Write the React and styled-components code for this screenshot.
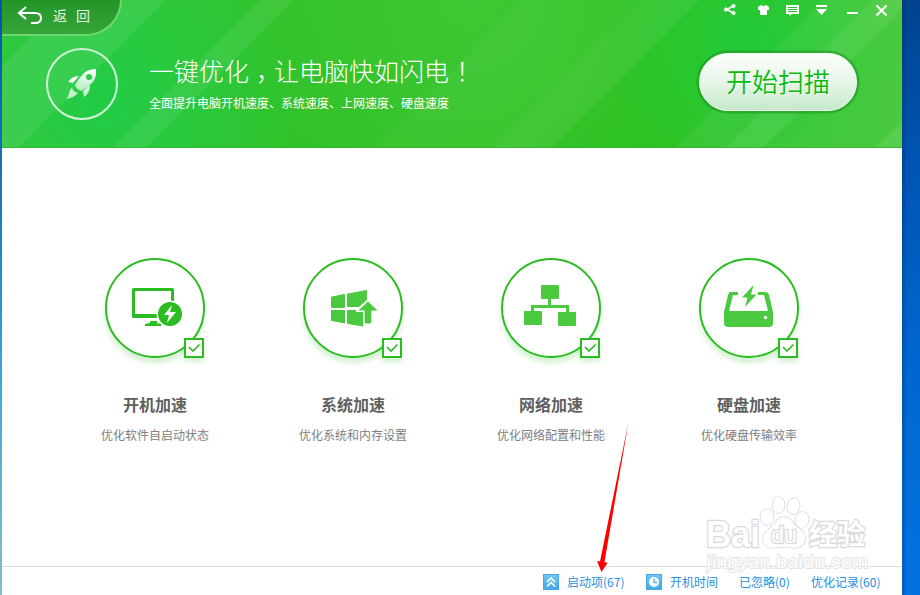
import styled, { createGlobalStyle } from "styled-components";

const GlobalStyle = createGlobalStyle`
  * {
    box-sizing: border-box;
  }

  body {
    margin: 0;
    overflow: hidden;
    font-family: "Noto Sans CJK SC", "Noto Sans", sans-serif;
    font-size: 12px;
  }

  svg {
    display: block;
    flex-shrink: 0;
  }
`;

const Desktop = styled.div`
  position: relative;
  display: grid;
  grid-template-columns: 2px 900px 18px;
  width: 920px;
  height: 595px;
`;

const LeftEdge = styled.div`
  background: linear-gradient(#0451a8, #1a7cc4 35%, #45add0 68%, #85bdc8);
`;

const RightEdge = styled.div`
  background:
    linear-gradient(90deg, rgba(0, 20, 60, 0.25), transparent 5px),
    linear-gradient(#01438f, #0053b0 25%, #0066cf 60%, #0272e0);
`;

const Window = styled.main`
  display: flex;
  flex-direction: column;
  background-color: #fff;
`;

const Header = styled.header`
  position: relative;
  height: 148px;
  border-bottom: 1px solid #35b933;
  background:
    radial-gradient(circle at 105px 100px, #22cc46 0, rgba(34, 204, 70, 0) 200px),
    radial-gradient(circle at 750px 45px, #22ca38 0, rgba(34, 202, 56, 0) 140px),
    radial-gradient(circle at 470px 0, #40c735 0, rgba(64, 199, 53, 0) 220px),
    linear-gradient(90deg, #38c63a, #32c22a 30%, #2dc222 72%, #40c835);
`;

const Rays = styled.svg`
  position: absolute;
  inset: 0;
`;

const TopBar = styled.div`
  position: relative;
  display: flex;
  justify-content: space-between;
  height: 36px;
`;

const BackTab = styled.div`
  display: flex;
  align-items: center;
  gap: 10px;
  width: 120px;
  height: 36px;
  padding: 0 0 4px 15px;
  border-right: 2px solid #6fd670;
  border-bottom: 2px solid #6fd670;
  border-bottom-right-radius: 36px;
  background: linear-gradient(#239426, #35a63a);
  color: #e2f6e2;
  font-size: 14px;
  letter-spacing: 9px;
  white-space: nowrap;
`;

const WindowTools = styled.div`
  display: grid;
  grid-template-columns: 34px 29px 29px 31px 29px 20px;
  padding-top: 3px;
  margin-right: 7px;
`;

const Hero = styled.div`
  position: relative;
  display: flex;
  padding: 12px 45px 0 44px;
`;

const RocketCircle = styled.div`
  display: flex;
  align-items: center;
  justify-content: center;
  width: 72px;
  height: 72px;
  border: 2px solid #d3f4d8;
  border-radius: 50%;
`;

const HeroText = styled.div`
  flex: 1;
  margin-left: 31px;
  color: #fff;
`;

const HeroTitle = styled.h1`
  margin: 4px 0 0;
  font-size: 25px;
  font-weight: 300;
  line-height: 36px;
`;

/* half-width marks padded back to a full cell, so they sit in its middle */
const Mark = styled.span`
  padding: 0 5.5px 0 7px;
  font-feature-settings: "halt";
`;

const HeroSub = styled.p`
  margin: 5px 0 0;
  font-size: 12px;
  line-height: 20px;
`;

const ScanButton = styled.button`
  width: 158px;
  height: 58px;
  margin-top: 5px;
  padding: 0 0 4px;
  border: 1px solid #f4fff4;
  border-radius: 29px;
  background: linear-gradient(#fbfefb, #e7f6e9 50%, #c6e9ca);
  box-shadow: 0 0 0 2.5px rgba(25, 130, 25, 0.42);
  color: #08bb0b;
  font-family: inherit;
  font-size: 26px;
  font-weight: 350;
  text-shadow: 1px 1px 0 #fff;
`;

const Features = styled.section`
  display: grid;
  grid-template-columns: repeat(4, 198px);
  flex: 1;
  padding: 110px 0 0 54px;
`;

const Feature = styled.div`
  display: flex;
  flex-direction: column;
  align-items: center;
`;

const FeatureCircle = styled.div`
  position: relative;
  display: flex;
  align-items: center;
  justify-content: center;
  width: 100px;
  height: 100px;
  border: 2px solid #2abc20;
  border-radius: 50%;
  box-shadow: 0 5px 5px rgba(42, 188, 32, 0.2);
`;

const CheckBox = styled.div`
  position: absolute;
  right: -1px;
  bottom: -2px;
  width: 20px;
  height: 20px;
  border: 2px solid #2abc20;
  background-color: #fff;
  box-shadow: 0 4px 5px rgba(42, 188, 32, 0.2);
`;

const FeatureTitle = styled.h2`
  margin: 34px 0 0;
  color: #606060;
  font-size: 16px;
  font-weight: 700;
  line-height: 24px;
`;

const FeatureText = styled.p`
  margin: 9px 0 0;
  color: #808080;
  line-height: 20px;
`;

const Footer = styled.footer`
  display: flex;
  align-items: center;
  justify-content: flex-end;
  gap: 21px;
  height: 29px;
  padding: 1px 21px 0 0;
  border-top: 1px solid #dcdcdc;
`;

const FooterLink = styled.a`
  display: flex;
  align-items: center;
  gap: 8px;
  width: ${(props) => props.$width}px;
  color: #2690e0;
  line-height: 20px;
  white-space: nowrap;
`;

const LinkIcon = styled.svg`
  border: 1px solid #46a8e2;
  background: linear-gradient(#71c5f5, #45a9e8);
`;

const Overlay = styled.svg`
  position: absolute;
  inset: 0;
  pointer-events: none;
`;

// diagonal light stripes, x is where each one meets the top edge
const rays = [
  { x: 66, width: 98, opacity: 0.08 },
  { x: 258, width: 34, opacity: 0.07 },
  { x: 521, width: 177, opacity: 0.035 },
  { x: 638, width: 60, opacity: 0.03 },
  { x: 821, width: 50, opacity: 0.06 },
  { x: 871, width: 38, opacity: 0.12 },
  { x: 909, width: 112, opacity: 0.05 },
  { x: 1021, width: 60, opacity: 0.12 },
];

const features = [
  { title: "开机加速", text: "优化软件自启动状态", Icon: MonitorIcon },
  { title: "系统加速", text: "优化系统和内存设置", Icon: WindowsIcon },
  { title: "网络加速", text: "优化网络配置和性能", Icon: NetworkIcon },
  { title: "硬盘加速", text: "优化硬盘传输效率", Icon: DiskIcon },
];

function MonitorIcon() {
  return (
    <svg width="96" height="96" viewBox="0 0 96 96">
      <path
        fillRule="evenodd"
        d="M26.500 28h39q1.500 0 1.500 1.500v27q0 1.500-1.500 1.500h-39q-1.500 0-1.500-1.500v-27q0-1.500 1.500-1.500zM28 31v23h36V31z"
        fill="#2abc20"
      />
      <path d="M43 61h7v2l4 1v2H38v-2l5-1z" fill="#2abc20" />
      <circle cx="63" cy="54" r="13.500" fill="#fff" />
      <circle cx="63" cy="54" r="12" fill="#2abc20" />
      <path d="M65 45L57 55h5l-2 8 9-11h-6z" fill="#fff" />
    </svg>
  );
}

function WindowsIcon() {
  return (
    <svg width="96" height="96" viewBox="0 0 96 96" fill="#4bca40">
      <path d="M27 36.500l12-2.500q1 0 1 1v12q0 1-1 1H27q-1 0-1-1v-9.500q0-1 1-1z" />
      <path d="M43 33.500l18-3.500q1 0 1 1v9l-8 7H43q-1 0-1-1V34.500q0-1 1-1z" />
      <path d="M26 50h14v13.500L27 61q-1 0-1-1z" />
      <path d="M42 50h9v2h7v14.500L43 64q-1 0-1-1z" />
      <path
        d="M63 40.500l11 10.500h-7V62q0 2-2 2h-4q-2 0-2-2V51h-7z"
        stroke="#fff"
        strokeWidth="1.200"
      />
    </svg>
  );
}

function NetworkIcon() {
  return (
    <svg width="96" height="96" viewBox="0 0 96 96" fill="#4bca40">
      <rect x="38" y="25" width="18" height="14" rx="1" />
      <rect x="21" y="51" width="18" height="14" rx="1" />
      <rect x="55" y="52" width="18" height="14" rx="1" />
      <path d="M45 39h3v6h18v7h-3v-4H31v3h-3v-6h17z" />
    </svg>
  );
}

function DiskIcon() {
  return (
    <svg width="96" height="96" viewBox="0 0 96 96" fill="#4bca40">
      <path d="M29 32h8v3h-5l-4 16h39l-4-16h-6v-3h8q2 0 3 3l4 17v11q0 4-4 4H27q-4 0-4-4V52l4-17q1-3 2-3z" />
      <path d="M52.500 25L41 37.500h5.500L44 47l11.500-12.500H50z" />
      <circle cx="64.500" cy="57.500" r="1.700" fill="#fff" />
    </svg>
  );
}

function RocketIcon() {
  return (
    <svg width="34" height="34" viewBox="0 0 34 34">
      <defs>
        <linearGradient id="rocket" x1="0" y1="0" x2="0" y2="1">
          <stop offset="0" stopColor="#fff" />
          <stop offset="1" stopColor="#b4edbf" />
        </linearGradient>
      </defs>
      <g fill="url(#rocket)">
        <path
          fillRule="evenodd"
          d="M31 2q1 9-4 14-5 5-11 8-4-1-6-6 4-7 9-12 5-4 12-4zM24 7a3 3 0 1 0 0 6 3 3 0 0 0 0-6z"
        />
        <path d="M14 9l-6 7-5-1q4-6 11-6zM25 18q0 8-6 12l-1-6zM7 21q1 4 6 5-4 5-12 6 3-3 3-6 1-4 3-5z" />
      </g>
    </svg>
  );
}

function ToolIcons() {
  return (
    <>
      <svg width="14" height="14" viewBox="0 0 14 14" fill="#fff" stroke="#fff">
        <path d="M10 3L4 6.500l6 3.500" fill="none" strokeWidth="1.500" />
        <circle cx="10.500" cy="3" r="1.600" />
        <circle cx="3" cy="6.500" r="1.600" />
        <circle cx="10.500" cy="10" r="1.600" />
      </svg>
      <svg width="14" height="14" viewBox="0 0 14 14" fill="#fff">
        <path d="M4 2q2.500 2 5 0l3 2v3h-2v5H3V7H1V4z" />
      </svg>
      <svg width="14" height="14" viewBox="0 0 14 14">
        <path d="M0 2h13v9H6l-3 2v-2H0z" fill="#fff" />
        <path d="M2 4.500h9M2 6.500h9M2 8.500h9" stroke="#36bb38" />
      </svg>
      <svg width="14" height="14" viewBox="0 0 14 14" fill="#fff">
        <path d="M1 2h11v2H1zM1 6h11l-5.500 6z" />
      </svg>
      <svg width="14" height="14" viewBox="0 0 14 14" fill="#fff">
        <path d="M1 9h11v2H1z" />
      </svg>
      <svg width="14" height="14" viewBox="0 0 14 14" stroke="#fff" strokeWidth="2">
        <path d="M1.500 2.500l10 10M11.500 2.500l-10 10" />
      </svg>
    </>
  );
}

function Watermark() {
  return (
    <g
      fill="#fff"
      stroke="#dadada"
      strokeWidth="1.600"
      fontFamily="'Liberation Sans', Arial, sans-serif"
      paintOrder="stroke"
    >
      <text
        x="706"
        y="547"
        fontSize="36"
        fontWeight="bold"
        textLength="54"
        lengthAdjust="spacingAndGlyphs"
        strokeWidth="2.500"
      >
        Bai
      </text>
      <ellipse cx="767" cy="517" rx="6.500" ry="8" />
      <ellipse cx="778.500" cy="505" rx="6" ry="8" />
      <ellipse cx="793.500" cy="506" rx="6" ry="8" transform="rotate(10 793 506)" />
      <ellipse cx="802" cy="520" rx="6.500" ry="8" transform="rotate(15 802 520)" />
      <path d="M784 517q6 0 9 6 3 4 8 7 5 4 4 10-2 8-10 8-5-1-11-1t-11 1q-9-1-10-8 0-6 5-10 4-3 7-7 3-6 9-6z" />
      <text x="771" y="543" fontSize="24" textLength="26" lengthAdjust="spacingAndGlyphs" strokeWidth="2.500">
        du
      </text>
      <text
        x="809"
        y="545"
        fontSize="28"
        fontWeight="bold"
        fontFamily="'Noto Sans CJK SC', sans-serif"
        strokeWidth="2.500"
      >
        经验
      </text>
      <text x="707" y="568" fontSize="19" textLength="161" strokeWidth="2" stroke="#e4e4e4">
        jingyan.baidu.com
      </text>
    </g>
  );
}

function App() {
  return (
    <>
      <GlobalStyle />
      <Desktop>
        <LeftEdge />
        <Window>
          <Header>
            <Rays width="900" height="147" viewBox="0 0 900 147">
              {rays.map((ray) => (
                <path
                  key={ray.x}
                  d={`M${ray.x} 0h${ray.width}l-148 148h-${ray.width}z`}
                  fill="#fff"
                  opacity={ray.opacity}
                />
              ))}
            </Rays>
            <TopBar>
              <BackTab>
                <svg width="26" height="20" viewBox="0 0 26 20" fill="none" stroke="#fff" strokeWidth="2">
                  <path d="M9 2L2 8l7 6M2 8h16q6 0 6 5t-6 5h-4" />
                </svg>
                返回
              </BackTab>
              <WindowTools>
                <ToolIcons />
              </WindowTools>
            </TopBar>
            <Hero>
              <RocketCircle>
                <RocketIcon />
              </RocketCircle>
              <HeroText>
                <HeroTitle>
                  一键优化<Mark>，</Mark>让电脑快如闪电<Mark>！</Mark>
                </HeroTitle>
                <HeroSub>全面提升电脑开机速度、系统速度、上网速度、硬盘速度</HeroSub>
              </HeroText>
              <ScanButton>开始扫描</ScanButton>
            </Hero>
          </Header>
          <Features>
            {features.map(({ title, text, Icon }) => (
              <Feature key={title}>
                <FeatureCircle>
                  <Icon />
                  <CheckBox>
                    <svg width="16" height="16" viewBox="0 0 16 16" fill="none" stroke="#2abc20" strokeWidth="1.600">
                      <path d="M3 7l4 4 6.500-6.500" />
                    </svg>
                  </CheckBox>
                </FeatureCircle>
                <FeatureTitle>{title}</FeatureTitle>
                <FeatureText>{text}</FeatureText>
              </Feature>
            ))}
          </Features>
          <Footer>
            <FooterLink $width={82}>
              <LinkIcon width="16" height="16" viewBox="0 0 14 14" fill="none" stroke="#fff" strokeWidth="1.600">
                <path d="M3 7l4-4 4 4M3 11.500l4-4 4 4" />
              </LinkIcon>
              启动项(67)
            </FooterLink>
            <FooterLink $width={72}>
              <LinkIcon width="16" height="16" viewBox="0 0 14 14" fill="none">
                <circle cx="7" cy="7" r="5" fill="#fff" />
                <path d="M7 3.500V7.500h3" stroke="#4fafe9" strokeWidth="1.300" />
              </LinkIcon>
              开机时间
            </FooterLink>
            <FooterLink $width={51}>已忽略(0)</FooterLink>
            <FooterLink $width={70}>优化记录(60)</FooterLink>
          </Footer>
        </Window>
        <RightEdge />
        <Overlay width="920" height="595" viewBox="0 0 920 595">
          <Watermark />
          <path d="M628.500 422L604.500 562l3 1-6 9-4.500-11 3 .5z" fill="#fe0000" />
        </Overlay>
      </Desktop>
    </>
  );
}

export default App;
